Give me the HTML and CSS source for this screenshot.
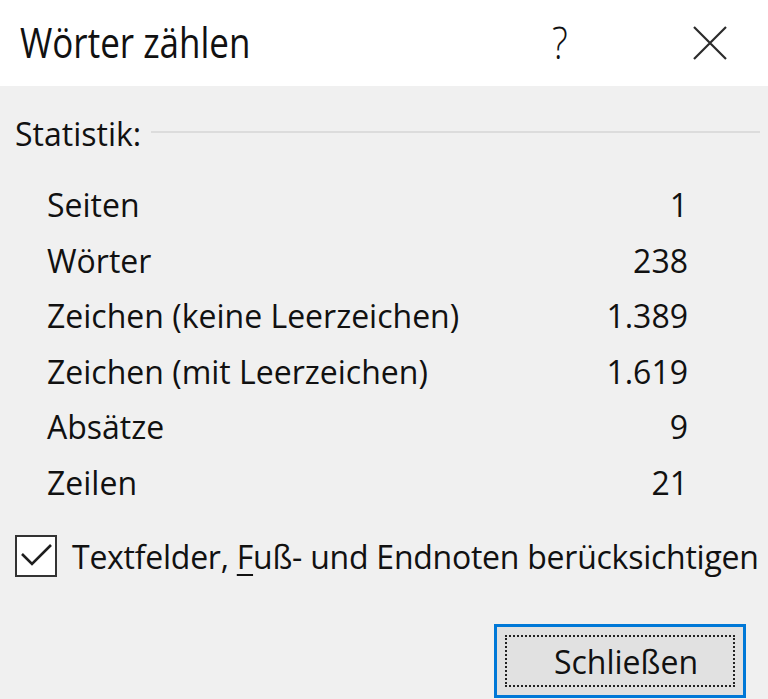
FILE: index.html
```html
<!DOCTYPE html>
<html lang="de">
<head>
    <meta charset="UTF-8">
    <meta name="viewport" content="width=device-width, initial-scale=1.0">
    <title>Wörter zählen</title>
    <link rel="stylesheet" href="styles.css">
</head>
<body>
    <div class="dialog">
        <!-- Title bar with help and close buttons -->
        <header class="titlebar">
            <span class="title">Wörter zählen</span>
            <span class="help">?</span>
            <svg class="close" width="36" height="34" viewBox="0 0 36 34">
                <path d="M2 1 L34 33 M34 1 L2 33" stroke="#2b2b2b" stroke-width="2.2" fill="none"/>
            </svg>
        </header>

        <section class="content">
            <div class="group-head">
                <span>Statistik:</span>
                <span class="rule"></span>
            </div>

            <div class="stats">
                <span>Seiten</span><span class="val">1</span>
                <span>Wörter</span><span class="val">238</span>
                <span>Zeichen (keine Leerzeichen)</span><span class="val">1.389</span>
                <span>Zeichen (mit Leerzeichen)</span><span class="val">1.619</span>
                <span>Absätze</span><span class="val">9</span>
                <span>Zeilen</span><span class="val">21</span>
            </div>

            <label class="check">
                <span class="box">
                    <svg width="38" height="38" viewBox="0 0 38 38">
                        <path d="M5 17 L15 27 L34 8" stroke="#1e1e1e" stroke-width="2.6" fill="none"/>
                    </svg>
                </span>
                <span class="check-text">Textfelder, <u>F</u>uß- und Endnoten berücksichtigen</span>
            </label>

            <div class="actions">
                <button class="btn"><span class="focus">Schließen</span></button>
            </div>
        </section>
    </div>
</body>
</html>
```

FILE: styles.css
```css
* {
    margin: 0;
    box-sizing: border-box;
}

body {
    width: 768px;
    height: 699px;
    overflow: hidden;
    background: #f0f0f0;
    font-family: "Open Sans", "Noto Sans", sans-serif;
    color: #111;
}

.titlebar {
    height: 86px;
    background: #fff;
    display: flex;
    align-items: center;
    padding: 0 0 4px 20px;
}

.title {
    font-size: 35px;
    flex: 1;
    display: inline-block;
    transform: scaleY(1.2);
    transform-origin: left center;
}

.help {
    font-size: 44px;
    font-weight: 300;
    width: 100px;
    margin-right: 40px;
    margin-top: 2px;
    display: inline-block;
    transform: scaleX(0.85);
    transform-origin: left center;
}

.close {
    margin-right: 40px;
    margin-top: 4px;
}

.content {
    padding: 28px 8px 0 15px;
    font-size: 32px;
}

.group-head {
    display: flex;
    align-items: center;
    line-height: 40px;
}

.rule {
    flex: 1;
    height: 2px;
    background: #dcdcdc;
    margin: -4px 0 0 10px;
}

.stats {
    display: grid;
    grid-template-columns: 1fr auto;
    line-height: 55.5px;
    margin-top: 23px;
    padding-left: 32px;
    width: 673px;
}

.val {
    text-align: right;
}

.check {
    display: flex;
    align-items: center;
    height: 48px;
    margin-top: 22px;
    gap: 15px;
}

.check-text {
    white-space: nowrap;
    letter-spacing: -0.25px;
}

.box {
    width: 42px;
    height: 42px;
    border: 2px solid #333;
    background: #fff;
    display: flex;
    align-items: center;
    justify-content: center;
}

.check u {
    text-decoration-thickness: 2px;
    text-underline-offset: 5px;
}

.actions {
    display: flex;
    justify-content: flex-end;
    padding-right: 14px;
    margin-top: 44px;
}

.btn {
    width: 252px;
    height: 74px;
    border: 3px solid #0078d7;
    background: #e1e1e1;
    padding: 8px;
    font: inherit;
    color: inherit;
    display: flex;
}

.focus {
    flex: 1;
    border: 2px dotted #222;
    display: flex;
    align-items: center;
    justify-content: center;
    padding-left: 12px;
}
```
